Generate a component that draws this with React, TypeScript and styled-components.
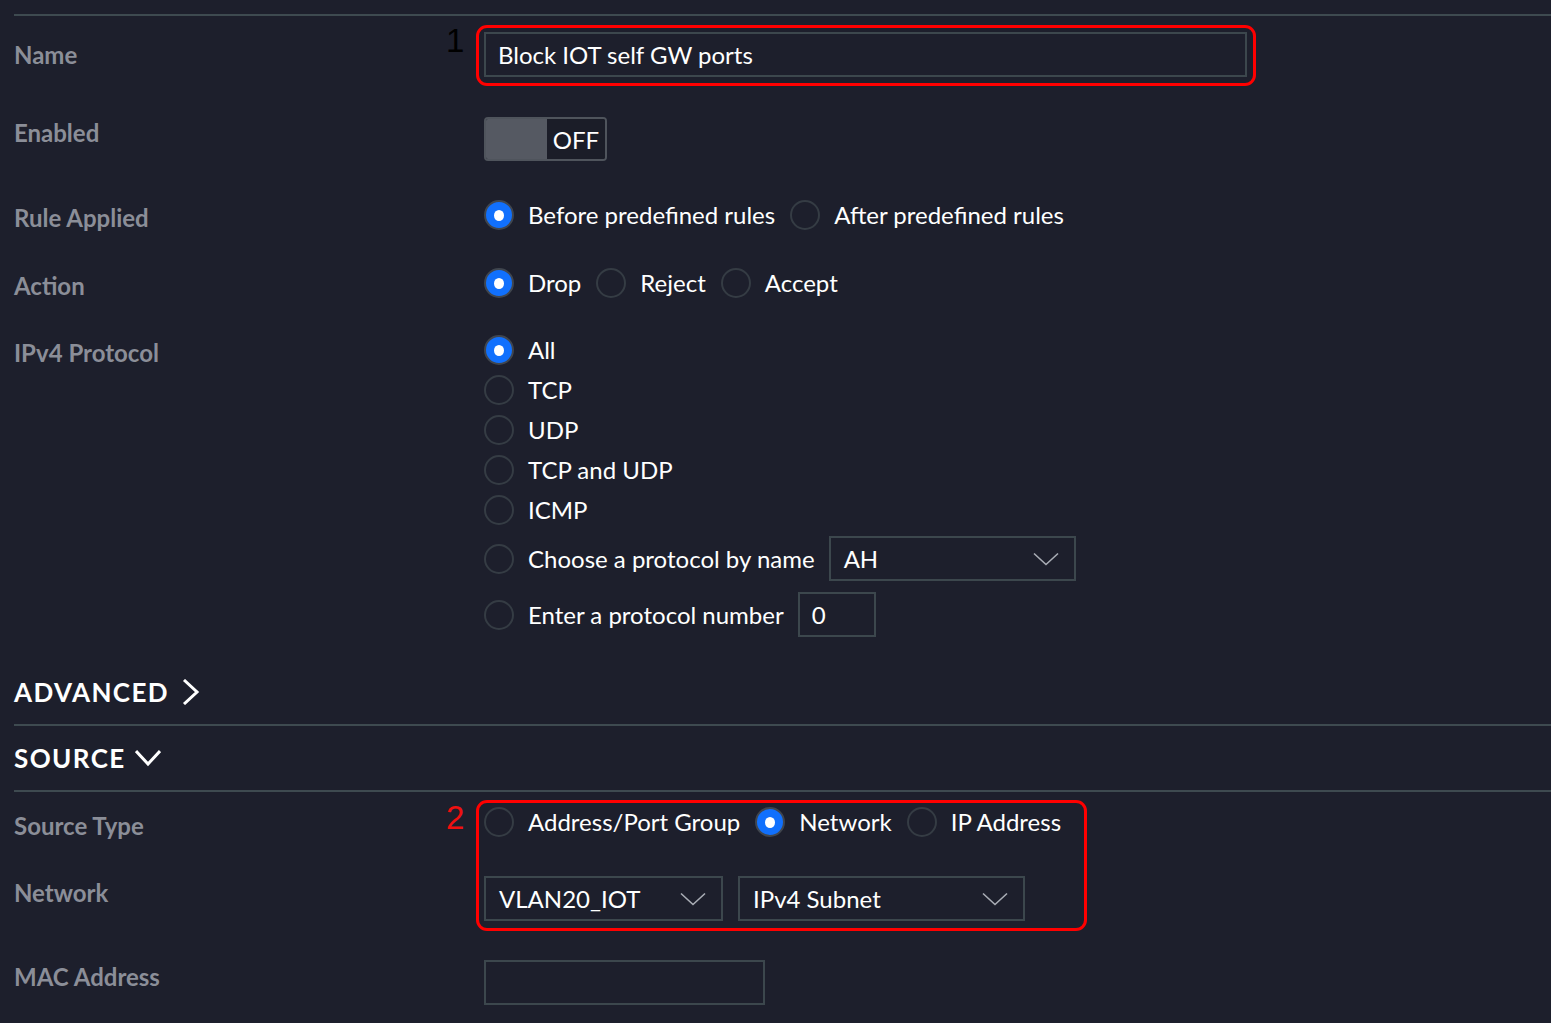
import React from "react";
import styled, { createGlobalStyle } from "styled-components";

const GlobalStyle = createGlobalStyle`
  html, body {
    margin: 0;
    padding: 0;
    background: #1d1f2c;
  }
  body {
    font-family: Lato, "Noto Sans", sans-serif;
    color: #ffffff;
  }
`;

const Page = styled.div`
  padding: 14px 0 24px 14px;
  min-height: 100vh;
  box-sizing: border-box;
  background: #1d1f2c;
`;

const Divider = styled.div<{ $mt: number }>`
  height: 2px;
  margin-top: ${(p) => p.$mt}px;
  background: #3e4a50;
`;

const Row = styled.div<{ $mt: number }>`
  display: grid;
  grid-template-columns: 470px 1fr;
  align-items: start;
  margin-top: ${(p) => p.$mt}px;
`;

const Label = styled.div<{ $offset: number }>`
  padding-top: ${(p) => p.$offset}px;
  font-family: Lato, sans-serif;
  font-weight: 700;
  font-size: 24px;
  line-height: 30px;
  color: #8b8e98;
`;

const Value = styled.div`
  display: flex;
  flex-direction: column;
  align-items: flex-start;
`;

const Field = styled.div<{ $w: number }>`
  width: ${(p) => p.$w}px;
  height: 45px;
  box-sizing: border-box;
  border: 2px solid #3c474d;
  display: flex;
  align-items: center;
  padding: 0 12px;
  font-family: Lato, sans-serif;
  font-size: 24px;
  color: #ffffff;
  white-space: nowrap;
`;

const SelectBox = styled(Field)`
  justify-content: space-between;
  padding: 0 15px 0 13px;
`;

const Annotated = styled.div`
  position: relative;
`;

const Frame = styled.div<{ $l: number; $t: number; $w: number; $h: number }>`
  position: absolute;
  left: ${(p) => p.$l}px;
  top: ${(p) => p.$t}px;
  width: ${(p) => p.$w}px;
  height: ${(p) => p.$h}px;
  box-sizing: border-box;
  border: 3px solid #ff0000;
  border-radius: 11px;
  pointer-events: none;
`;

const Marker = styled.div<{ $l: number; $t: number; $red?: boolean }>`
  position: absolute;
  left: ${(p) => p.$l}px;
  top: ${(p) => p.$t}px;
  font-family: "Liberation Sans", Arial, sans-serif;
  font-size: 33px;
  line-height: 33px;
  color: ${(p) => (p.$red ? "#f01010" : "#000000")};
`;

const Toggle = styled.div`
  display: flex;
  width: 123px;
  height: 44px;
  box-sizing: border-box;
  border: 2px solid #4f545c;
  border-radius: 4px;
  overflow: hidden;
`;

const Knob = styled.div`
  width: 61px;
  background: #555962;
`;

const ToggleText = styled.div`
  flex: 1;
  display: flex;
  align-items: center;
  justify-content: center;
  background: #1b1d28;
  font-family: Lato, sans-serif;
  font-size: 24px;
  color: #ffffff;
`;

const Options = styled.div`
  display: flex;
  align-items: center;
  gap: 15px;
`;

const OptionList = styled.div`
  display: flex;
  flex-direction: column;
  gap: 10px;
`;

const Option = styled.div<{ $mt?: number }>`
  display: flex;
  align-items: center;
  gap: 14px;
  min-height: 30px;
  margin-top: ${(p) => p.$mt ?? 0}px;
  font-family: Lato, sans-serif;
  font-size: 24px;
  line-height: 30px;
  color: #ffffff;
  white-space: nowrap;
`;

const Circle = styled.span<{ $on: boolean }>`
  width: 30px;
  height: 30px;
  flex: none;
  box-sizing: border-box;
  border-radius: 50%;
  border: 2px solid ${(p) => (p.$on ? "#40464f" : "#353c44")};
  background: ${(p) => (p.$on ? "#1170fd" : "transparent")};
  display: flex;
  align-items: center;
  justify-content: center;

  &::after {
    content: "";
    display: ${(p) => (p.$on ? "block" : "none")};
    width: 10px;
    height: 11px;
    border-radius: 50%;
    background: #ffffff;
  }
`;

const Header = styled.div<{ $mt: number }>`
  display: flex;
  align-items: center;
  gap: 9px;
  margin-top: ${(p) => p.$mt}px;
  font-family: Lato, sans-serif;
  font-weight: 700;
  font-size: 26px;
  line-height: 32px;
  letter-spacing: 1.4px;
  text-transform: uppercase;
  color: #ffffff;
`;

const Group = styled.div`
  position: relative;
`;

const Inline = styled.div`
  display: flex;
  align-items: center;
  gap: 15px;
`;

const Radio = ({ on, children, mt }: { on?: boolean; children: React.ReactNode; mt?: number }) => (
  <Option $mt={mt}>
    <Circle $on={!!on} />
    {children}
  </Option>
);

const SelectChevron = () => (
  <svg width="26" height="14" viewBox="0 0 26 14" fill="none">
    <polyline points="1,1.5 13,12.5 25,1.5" stroke="#a9adb5" strokeWidth="1.6" />
  </svg>
);

const Select = ({ w, children }: { w: number; children: React.ReactNode }) => (
  <SelectBox $w={w}>
    <span>{children}</span>
    <SelectChevron />
  </SelectBox>
);

const ChevronRight = () => (
  <svg width="26" height="26" viewBox="0 0 26 26" fill="none">
    <polyline points="6,1 19,13 6,25" stroke="#ffffff" strokeWidth="3" />
  </svg>
);

const ChevronDown = () => (
  <svg width="26" height="26" viewBox="0 0 26 26" fill="none">
    <polyline points="1,6 13,19 25,6" stroke="#ffffff" strokeWidth="3" />
  </svg>
);

export default function App() {
  return (
    <>
      <GlobalStyle />
      <Page>
        <Divider $mt={0} />

        <Row $mt={16}>
          <Label $offset={8}>Name</Label>
          <Value>
            <Annotated>
              <Field $w={763}>Block IOT self GW ports</Field>
              <Frame $l={-8} $t={-7} $w={780} $h={61} />
              <Marker $l={-38} $t={-8}>1</Marker>
            </Annotated>
          </Value>
        </Row>

        <Row $mt={40}>
          <Label $offset={1}>Enabled</Label>
          <Value>
            <Toggle>
              <Knob />
              <ToggleText>OFF</ToggleText>
            </Toggle>
          </Value>
        </Row>

        <Row $mt={39}>
          <Label $offset={3}>Rule Applied</Label>
          <Options>
            <Radio on>Before predefined rules</Radio>
            <Radio>After predefined rules</Radio>
          </Options>
        </Row>

        <Row $mt={35}>
          <Label $offset={3}>Action</Label>
          <Options>
            <Radio on>Drop</Radio>
            <Radio>Reject</Radio>
            <Radio>Accept</Radio>
          </Options>
        </Row>

        <Row $mt={34}>
          <Label $offset={3}>IPv4 Protocol</Label>
          <OptionList>
            <Radio on>All</Radio>
            <Radio>TCP</Radio>
            <Radio>UDP</Radio>
            <Radio>TCP and UDP</Radio>
            <Radio>ICMP</Radio>
            <Radio mt={1}>
              Choose a protocol by name
              <Select w={247}>AH</Select>
            </Radio>
            <Radio mt={1}>
              Enter a protocol number
              <Field $w={78}>0</Field>
            </Radio>
          </OptionList>
        </Row>

        <Header $mt={39}>
          Advanced
          <ChevronRight />
        </Header>
        <Divider $mt={16} />

        <Header $mt={16}>
          Source
          <ChevronDown />
        </Header>
        <Divider $mt={16} />

        <Group>
          <Row $mt={15}>
            <Label $offset={4}>Source Type</Label>
            <Options>
              <Radio>Address/Port Group</Radio>
              <Radio on>Network</Radio>
              <Radio>IP Address</Radio>
            </Options>
          </Row>

          <Row $mt={35}>
            <Label $offset={2}>Network</Label>
            <Inline>
              <Select w={239}>VLAN20_IOT</Select>
              <Select w={287}>IPv4 Subnet</Select>
            </Inline>
          </Row>

          <Frame $l={462} $t={-7} $w={611} $h={131} />
          <Marker $l={432} $t={-6} $red>2</Marker>
        </Group>

        <Row $mt={39}>
          <Label $offset={2}>MAC Address</Label>
          <Value>
            <Field $w={281} />
          </Value>
        </Row>
      </Page>
    </>
  );
}
